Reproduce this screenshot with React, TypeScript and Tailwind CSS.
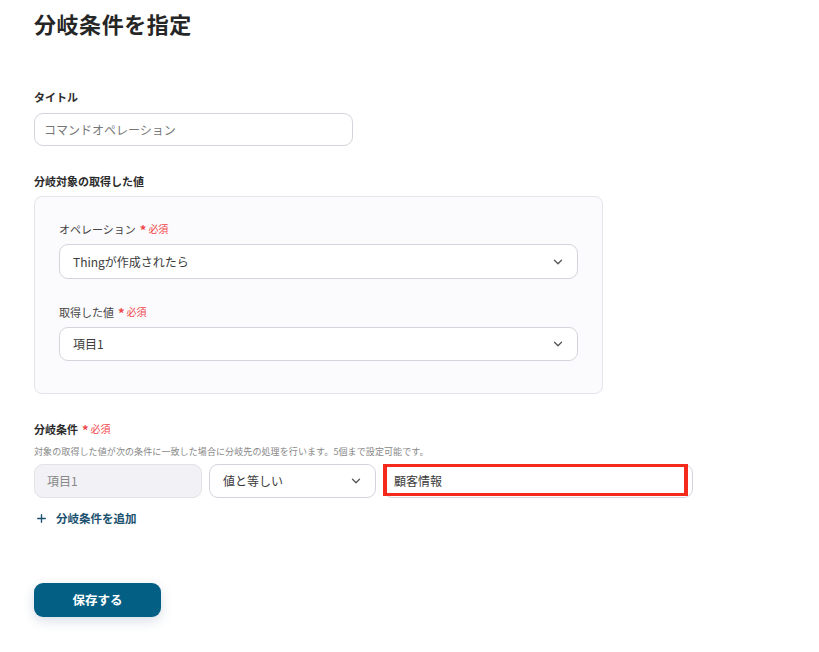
import { ChevronDown, Plus } from 'lucide-react'

const font = { fontFamily: '"Noto Sans CJK JP", "Noto Sans", sans-serif' }

function Required() {
  return (
    <span className="ml-1 inline-flex items-center text-[10px] font-normal text-[#f0464b]">
      <span className="mr-[2px] text-[13px] font-bold leading-none">*</span>必須
    </span>
  )
}

interface SelectBoxProps {
  value: string
  className?: string
}

function SelectBox({ value, className = '' }: SelectBoxProps) {
  return (
    <div
      className={`flex items-center justify-between rounded-[9px] border border-[#d3d5dc] bg-white pl-[13px] pr-[12px] text-[12px] text-[#3b3b3b] ${className}`}
    >
      <span>{value}</span>
      <ChevronDown className="h-[14px] w-[14px] text-[#555]" strokeWidth={2.2} />
    </div>
  )
}

export default function App() {
  return (
    <div className="min-h-[652px] w-full bg-white px-[34px] pt-[8px] text-[#2b2b2b]" style={font}>
      <h1 className="text-[22px] font-bold leading-[30px] tracking-wide text-[#262626]">分岐条件を指定</h1>

      {/* Title */}
      <div className="mt-[51px] text-[11px] font-bold leading-[16px]">タイトル</div>
      <div className="mt-[8px] flex h-[33px] w-[319px] items-center rounded-[9px] border border-[#d3d5dc] px-[9px] text-[12px] text-[#777]">
        コマンドオペレーション
      </div>

      {/* Value target */}
      <div className="mt-[27px] text-[11px] font-bold leading-[16px]">分岐対象の取得した値</div>
      <div className="mt-[7px] w-[569px] rounded-[8px] border border-[#e4e4ea] bg-[#fbfafc] px-[24px] pb-[32px] pt-[24px]">
        <div className="flex items-center text-[11px] leading-[16px] text-[#444]">
          オペレーション
          <Required />
        </div>
        <SelectBox value="Thingが作成されたら" className="mt-[7px] h-[35px]" />
        <div className="mt-[25px] flex items-center text-[11px] leading-[16px] text-[#444]">
          取得した値
          <Required />
        </div>
        <SelectBox value="項目1" className="mt-[7px] h-[34px]" />
      </div>

      {/* Conditions */}
      <div className="mt-[27px] flex items-center text-[11px] font-bold leading-[16px]">
        分岐条件
        <Required />
      </div>
      <div className="mt-[8px] text-[9px] leading-[13px] tracking-[0.1px] text-[#888]">
        対象の取得した値が次の条件に一致した場合に分岐先の処理を行います。5個まで設定可能です。
      </div>
      <div className="mt-[6px] flex h-[34px] items-stretch">
        <div className="flex w-[168px] items-center rounded-[9px] border border-[#e2e2e8] bg-[#f2f1f5] px-[12px] text-[12px] text-[#888]">
          項目1
        </div>
        <SelectBox value="値と等しい" className="ml-[7px] w-[167px]" />
        <div className="relative ml-[7px] flex w-[310px] items-center rounded-[9px] border border-[#d3d5dc] bg-white px-[10px] text-[12px] text-[#3b3b3b]">
          顧客情報
          <div className="pointer-events-none absolute left-[-1px] right-[4px] top-[-1px] bottom-[1px] border-x-[4px] border-y-[3px] border-[#f42a1c]" />
        </div>
      </div>

      <button className="mt-[11px] flex items-center gap-[8px] pl-[1px] text-[11.5px] font-bold leading-[18px] text-[#1c5270]">
        <Plus className="h-[13px] w-[13px]" strokeWidth={2.5} />
        分岐条件を追加
      </button>

      <button className="mt-[56px] flex h-[34px] w-[127px] items-center justify-center rounded-[9px] bg-[#045f85] text-[12.5px] font-bold text-white shadow-[0_4px_12px_rgba(40,70,120,0.18)]">
        保存する
      </button>
    </div>
  )
}
